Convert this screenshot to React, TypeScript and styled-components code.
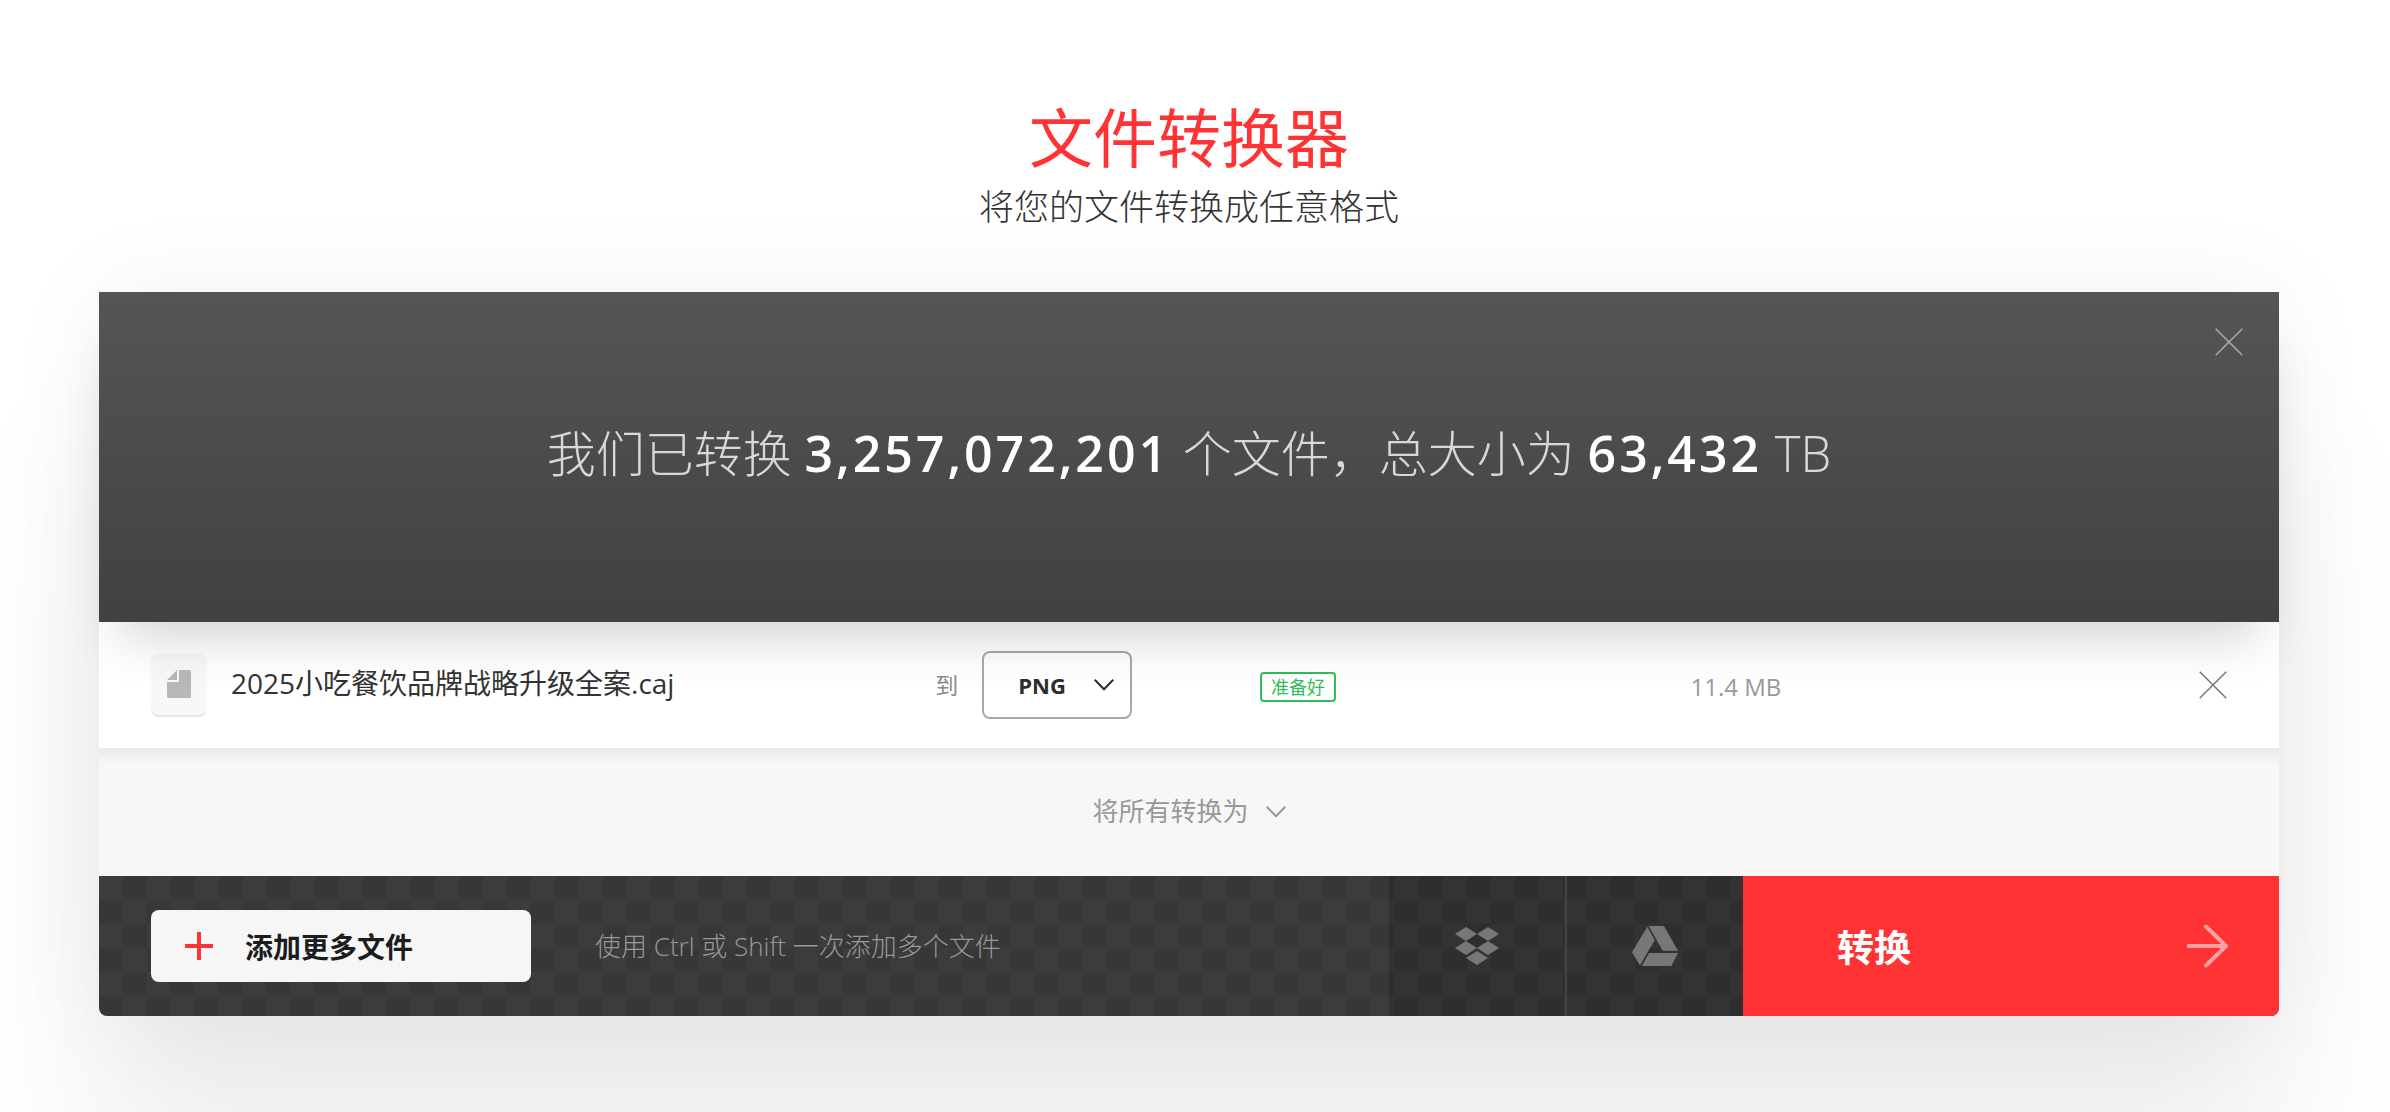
import React, { useState } from "react";
import styled, { createGlobalStyle } from "styled-components";

const red = "#ff3333";

const GlobalStyle = createGlobalStyle`
  *, *::before, *::after { box-sizing: border-box; }
  body {
    margin: 0;
    background: #fff;
    color: #333;
    font-family: "Open Sans", "Noto Sans CJK SC", sans-serif;
    overflow: hidden;
  }
  button, select { font-family: inherit; margin: 0; }
`;

const Page = styled.main`
  min-height: 100vh;
  padding: 92px 111px 96px 99px;
`;

const Intro = styled.header`
  text-align: center;
  padding-bottom: 62px;
`;

const Title = styled.h1`
  margin: 0;
  color: ${red};
  font-size: 64px;
  font-weight: 400;
  line-height: 92px;
`;

const Subtitle = styled.p`
  margin: 0;
  font-size: 35px;
  font-weight: 300;
  line-height: 46px;
`;

const Card = styled.section`
  display: flex;
  flex-direction: column;
  border-radius: 0 0 8px 8px;
  box-shadow: 0 0 100px rgba(0, 0, 0, 0.06), 0 150px 160px rgba(0, 0, 0, 0.075);
`;

const Banner = styled.div`
  position: relative;
  z-index: 1;
  display: flex;
  align-items: center;
  justify-content: center;
  min-height: 330px;
  padding: 0 120px 8px;
  background: linear-gradient(#555, #414141);
  box-shadow: 0 36px 48px -20px rgba(0, 0, 0, 0.17);
`;

const Counter = styled.p`
  margin: 0;
  color: #d8d8d8;
  font-size: 49px;
  font-weight: 300;
  line-height: 68px;
`;

const Figure = styled.strong`
  color: #fff;
  font-size: 50px;
  font-weight: 600;
  letter-spacing: 3px;
`;

const CloseButton = styled.button<{ $tone: string }>`
  display: flex;
  padding: 0;
  border: 0;
  background: none;
  color: ${(p) => p.$tone};
  cursor: pointer;
`;

const BannerClose = styled.div`
  position: absolute;
  top: 36px;
  right: 36px;
`;

const FileList = styled.ul`
  margin: 0;
  padding: 0;
  list-style: none;
`;

const FileRow = styled.li`
  display: grid;
  grid-template-columns: 785fr 325fr 431fr 509fr auto;
  align-items: center;
  min-height: 126px;
  padding: 0 52px;
  background: #fff;
`;

const FileCell = styled.div`
  display: flex;
  align-items: center;
  gap: 24px;
`;

const FileBadge = styled.span`
  display: flex;
  align-items: center;
  justify-content: center;
  width: 56px;
  height: 64px;
  border-bottom: 2px solid #e6e6e6;
  border-radius: 8px;
  background: #f8f8f8;
`;

const FileName = styled.span`
  padding-bottom: 4px;
  font-size: 28px;
  line-height: 40px;
`;

const TargetLabel = styled.label`
  color: #8c8c8c;
  font-size: 23px;
  line-height: 32px;
`;

const SelectBox = styled.span`
  position: relative;
  display: inline-flex;
  align-items: center;
`;

const SelectArrow = styled.span<{ $right: number }>`
  position: absolute;
  right: ${(p) => p.$right}px;
  display: flex;
  pointer-events: none;
`;

const FormatSelect = styled.select`
  appearance: none;
  width: 150px;
  height: 68px;
  padding: 0 34px;
  border: 2px solid #a8a8a8;
  border-radius: 8px;
  background: transparent;
  color: #2d2d2d;
  font-size: 22px;
  font-weight: 700;
`;

const Status = styled.span`
  display: inline-block;
  margin-top: 4px;
  padding: 0 9px;
  border: 2px solid #32bd5b;
  border-radius: 4px;
  color: #32bd5b;
  font-size: 18px;
  line-height: 26px;
`;

const Size = styled.span`
  padding-top: 4px;
  color: #999;
  font-size: 24px;
  line-height: 32px;
`;

const ConvertAll = styled.div`
  display: flex;
  align-items: center;
  justify-content: center;
  min-height: 128px;
  background: linear-gradient(#e8e8e8, #f7f7f7 16px);
`;

const ConvertAllSelect = styled.select`
  appearance: none;
  height: 48px;
  padding: 0 36px 2px 0;
  border: 0;
  background: transparent;
  color: #999;
  font-size: 26px;
`;

const Footer = styled.footer`
  display: flex;
  min-height: 140px;
  overflow: hidden;
  border-radius: 0 0 8px 8px;
  background: repeating-conic-gradient(#373737 0 25%, #3c3c3c 0 50%) 0 0 / 48px 48px;
`;

const AddArea = styled.div`
  display: flex;
  flex: 1;
  align-items: center;
  gap: 64px;
  padding: 0 52px;
`;

const AddButton = styled.button`
  display: flex;
  align-items: center;
  gap: 32px;
  width: 380px;
  height: 72px;
  padding: 0 34px;
  border: 0;
  border-radius: 8px;
  background: #f6f6f6;
  color: #1c1c1c;
  font-size: 28px;
  font-weight: 700;
  cursor: pointer;
`;

const Hint = styled.span`
  color: #999;
  font-size: 26px;
  font-weight: 300;
  line-height: 36px;
`;

const CloudButton = styled.button`
  display: flex;
  align-items: center;
  justify-content: center;
  width: 176px;
  padding: 0;
  border: 0;
  background: rgba(0, 0, 0, 0.15);
  color: #777;
  cursor: pointer;
`;

const Divider = styled.span`
  width: 2px;
  background: #424242;
`;

const ConvertButton = styled.button`
  display: flex;
  align-items: center;
  justify-content: space-between;
  width: 536px;
  padding: 0 50px 0 94px;
  border: 0;
  background: ${red};
  color: #fff;
  font-size: 37px;
  font-weight: 700;
  cursor: pointer;
`;

const Cross = () => (
  <svg width="28" height="28" viewBox="0 0 28 28" fill="none" stroke="currentColor" strokeWidth="1.5" aria-hidden="true">
    <path d="M.7.7l26.6 26.6M27.3.7L.7 27.3" />
  </svg>
);

const Chevron = ({ color }: { color: string }) => (
  <svg width="20" height="12" viewBox="0 0 20 12" fill="none" stroke={color} strokeWidth="2" aria-hidden="true">
    <path d="M.8.8L10 10.2 19.2.8" />
  </svg>
);

const DocumentIcon = () => (
  <svg width="24" height="28" viewBox="0 0 24 28" fill="#b8b8b8" aria-hidden="true">
    <path d="M12 0h10.5A1.5 1.5 0 0 1 24 1.500V26.500a1.500 1.500 0 0 1-1.500 1.500h-21A1.500 1.500 0 0 1 0 26.500V12h12z" />
    <path d="M10 0v10H0z" />
  </svg>
);

const PlusIcon = () => (
  <svg width="28" height="28" viewBox="0 0 28 28" stroke={red} strokeWidth="4" aria-hidden="true">
    <path d="M14 0v28M0 14h28" />
  </svg>
);

const DropboxIcon = () => (
  <svg width="44" height="38" viewBox="0 0 44 38" fill="currentColor" aria-hidden="true">
    <path d="M11 0l11 7-11 7L0 7zM33 0l11 7-11 7-11-7zM11 14l11 7-11 7-11-7zM33 14l11 7-11 7-11-7zM22 24l11 7-11 7-11-7z" />
  </svg>
);

const DriveIcon = () => (
  <svg width="46" height="40" viewBox="0 0 46 40" fill="currentColor" aria-hidden="true">
    <path d="M15.300.7L22.700 14 8 39.500 0 26.300zM16.700 0H32l14 24.700H30.700zM17 27h29l-6.700 13H9.700z" />
  </svg>
);

const ArrowIcon = () => (
  <svg width="42" height="44" viewBox="0 0 42 44" fill="none" stroke="#ffa0a0" strokeWidth="4" aria-hidden="true">
    <path d="M0 22h39" />
    <path d="M19 2.500L39 22 19 41.500" strokeLinecap="round" strokeLinejoin="round" />
  </svg>
);

export default function App() {
  const [format, setFormat] = useState("PNG");

  return (
    <>
      <GlobalStyle />
      <Page>
        <Intro>
          <Title>文件转换器</Title>
          <Subtitle>将您的文件转换成任意格式</Subtitle>
        </Intro>
        <Card>
          <Banner>
            <Counter>
              我们已转换 <Figure>3,257,072,201</Figure> 个文件，总大小为 <Figure>63,432</Figure> TB
            </Counter>
            <BannerClose>
              <CloseButton type="button" $tone="#ababab" aria-label="关闭">
                <Cross />
              </CloseButton>
            </BannerClose>
          </Banner>
          <FileList>
            <FileRow>
              <FileCell>
                <FileBadge>
                  <DocumentIcon />
                </FileBadge>
                <FileName>2025小吃餐饮品牌战略升级全案.caj</FileName>
              </FileCell>
              <FileCell>
                <TargetLabel htmlFor="format">到</TargetLabel>
                <SelectBox>
                  <FormatSelect id="format" value={format} onChange={(e) => setFormat(e.target.value)}>
                    <option>PNG</option>
                  </FormatSelect>
                  <SelectArrow $right={18}>
                    <Chevron color="#2d2d2d" />
                  </SelectArrow>
                </SelectBox>
              </FileCell>
              <div>
                <Status>准备好</Status>
              </div>
              <Size>11.4 MB</Size>
              <CloseButton type="button" $tone="#777" aria-label="移除文件">
                <Cross />
              </CloseButton>
            </FileRow>
          </FileList>
          <ConvertAll>
            <SelectBox>
              <ConvertAllSelect aria-label="将所有转换为" defaultValue="">
                <option value="">将所有转换为</option>
              </ConvertAllSelect>
              <SelectArrow $right={0}>
                <Chevron color="#999" />
              </SelectArrow>
            </SelectBox>
          </ConvertAll>
          <Footer>
            <AddArea>
              <AddButton type="button">
                <PlusIcon />
                添加更多文件
              </AddButton>
              <Hint>使用 Ctrl 或 Shift 一次添加多个文件</Hint>
            </AddArea>
            <CloudButton type="button" aria-label="Dropbox">
              <DropboxIcon />
            </CloudButton>
            <Divider />
            <CloudButton type="button" aria-label="Google Drive">
              <DriveIcon />
            </CloudButton>
            <ConvertButton type="button">
              转换
              <ArrowIcon />
            </ConvertButton>
          </Footer>
        </Card>
      </Page>
    </>
  );
}
